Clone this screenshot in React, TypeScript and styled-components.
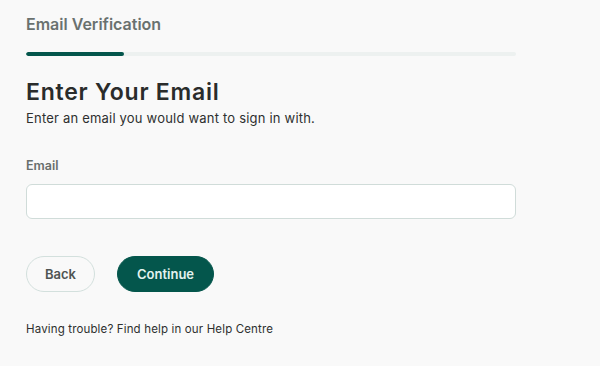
import styled, { createGlobalStyle } from 'styled-components';

const GlobalStyle = createGlobalStyle`
  html, body {
    margin: 0;
    padding: 0;
    background: #f9f9f9;
    font-family: Inter, "Noto Sans", sans-serif;
  }
`;

const Page = styled.div`
  width: 490px;
  padding: 14px 0 0 26px;
  display: flex;
  flex-direction: column;
`;

const StepTitle = styled.h3`
  margin: 0;
  font-size: 16px;
  font-weight: 600;
  color: #6a716f;
  letter-spacing: 0;
  line-height: 20px;
`;

const Track = styled.div`
  margin-top: 18px;
  height: 4px;
  border-radius: 2px;
  background: #edf1f0;
  overflow: hidden;
`;

const TrackFill = styled.div`
  height: 100%;
  border-radius: 2px;
  background: #04564c;
`;

const Heading = styled.h1`
  margin: 22px 0 0;
  font-size: 23px;
  font-weight: 600;
  color: #2a2c2b;
  letter-spacing: 0.75px;
  line-height: 28px;
`;

const Subtitle = styled.p`
  margin: 3px 0 0;
  font-size: 13px;
  color: #2e302f;
  letter-spacing: 0.2px;
  line-height: 18px;
`;

const Label = styled.label`
  margin-top: 31px;
  font-size: 12.5px;
  font-weight: 600;
  color: #686e6c;
  line-height: 16px;
`;

const Input = styled.input`
  margin-top: 10px;
  height: 35px;
  box-sizing: border-box;
  border: 1px solid #d0dcd9;
  border-radius: 6px;
  background: #fff;
  padding: 0 12px;
  font: inherit;
  outline: none;
`;

const Actions = styled.div`
  margin-top: 37px;
  display: flex;
  gap: 22px;
`;

const Button = styled.button<{ $primary?: boolean }>`
  height: 36px;
  box-sizing: border-box;
  border-radius: 18px;
  padding: 0 ${(p) => (p.$primary ? '19px' : '18px')};
  font-family: inherit;
  font-size: 13px;
  font-weight: 600;
  border: 1px solid ${(p) => (p.$primary ? '#04564c' : '#d3e0dd')};
  background: ${(p) => (p.$primary ? '#04564c' : 'transparent')};
  color: ${(p) => (p.$primary ? '#e3f3ef' : '#4f5453')};
  cursor: pointer;
`;

const Help = styled.p`
  margin: 29px 0 0;
  font-size: 11.5px;
  color: #2e302f;
  letter-spacing: 0.15px;
  line-height: 16px;
`;

export default function App() {
  const progress = 20;
  return (
    <>
      <GlobalStyle />
      <Page>
        <StepTitle>Email Verification</StepTitle>
        <Track>
          <TrackFill style={{ width: `${progress}%` }} />
        </Track>
        <Heading>Enter Your Email</Heading>
        <Subtitle>Enter an email you would want to sign in with.</Subtitle>
        <Label htmlFor="email">Email</Label>
        <Input id="email" type="email" />
        <Actions>
          <Button>Back</Button>
          <Button $primary>Continue</Button>
        </Actions>
        <Help>Having trouble? Find help in our Help Centre</Help>
      </Page>
    </>
  );
}
